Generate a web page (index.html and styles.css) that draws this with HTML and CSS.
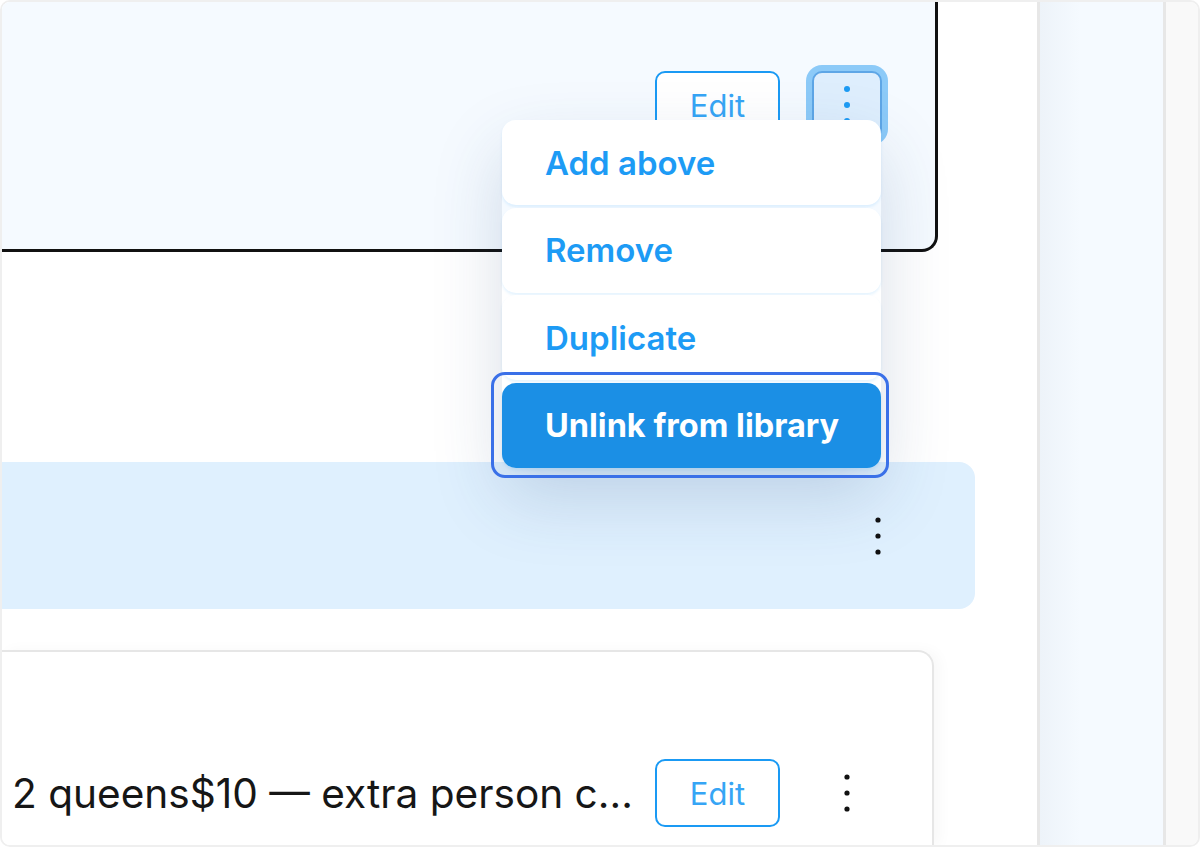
FILE: index.html
```html
<!DOCTYPE html>
<html lang="en">
<head>
<meta charset="utf-8">
<title>Blocks</title>
<link rel="stylesheet" href="styles.css">
</head>
<body>
<div class="frame">
  <main class="main">
    <section class="card-top">
      <div class="actions">
        <button class="btn-edit">Edit</button>
        <div class="kebab-wrap">
          <button class="kebab kebab-active" aria-label="More">
            <svg width="8" height="40" viewBox="0 0 8 40"><circle cx="4" cy="4" r="3"/><circle cx="4" cy="20" r="3"/><circle cx="4" cy="36" r="3"/></svg>
          </button>
          <div class="menu">
            <div class="menu-item">Add above</div>
            <div class="menu-item">Remove</div>
            <div class="menu-item">Duplicate</div>
            <div class="menu-item menu-item-primary">Unlink from library</div>
          </div>
        </div>
      </div>
    </section>
    <section class="strip">
      <button class="kebab kebab-dark" aria-label="More">
        <svg width="8" height="40" viewBox="0 0 8 40"><circle cx="4" cy="4" r="2.6"/><circle cx="4" cy="20" r="2.6"/><circle cx="4" cy="36" r="2.6"/></svg>
      </button>
    </section>
    <section class="card-bottom">
      <div class="row">
        <span class="row-text">2 queens$10 — extra person c...</span>
        <button class="btn-edit btn-edit-row">Edit</button>
        <button class="kebab kebab-dark" aria-label="More">
          <svg width="8" height="40" viewBox="0 0 8 40"><circle cx="4" cy="4" r="2.6"/><circle cx="4" cy="20" r="2.6"/><circle cx="4" cy="36" r="2.6"/></svg>
        </button>
      </div>
    </section>
  </main>
  <aside class="panel-blue"></aside>
  <aside class="panel-gray"></aside>
</div>
</body>
</html>
```
FILE: styles.css
```css
* { box-sizing: border-box; }
html, body { margin: 0; padding: 0; background: #fff; }
body { font-family: Inter, "Noto Sans", sans-serif; }

.frame {
  width: 1200px;
  height: 847px;
  border: 2px solid #efefef;
  border-radius: 10px;
  display: flex;
  overflow: hidden;
  background: #fff;
  position: relative;
}

.main {
  width: 1035px;
  flex: none;
  display: flex;
  flex-direction: column;
  background: #fff;
}

.panel-blue {
  width: 126px;
  flex: none;
  border-left: 3px solid #e7e7e7;
  background: linear-gradient(to right, #edf3f9, #f5faff 40px);
}

.panel-gray {
  flex: 1;
  border-left: 3px solid #e7e7e7;
  background: #f9f9f9;
}

.card-top {
  width: 936px;
  height: 250px;
  flex: none;
  background: #f5faff;
  border-right: 3px solid #111;
  border-bottom: 3px solid #111;
  border-bottom-right-radius: 16px;
  padding: 69px 53px 0 0;
  display: flex;
  justify-content: flex-end;
  align-items: flex-start;
  position: relative;
  z-index: 2;
}

.actions {
  display: flex;
  align-items: center;
  gap: 32px;
}

.btn-edit {
  width: 125px;
  height: 68px;
  border: 2.5px solid #1a9af4;
  border-radius: 10px;
  background: #fff;
  color: #36a5f5;
  font-family: Inter, "Noto Sans", sans-serif;
  font-size: 31px;
  font-weight: 400;
  padding: 0;
  display: flex;
  align-items: center;
  justify-content: center;
}

.kebab {
  width: 70px;
  height: 68px;
  border: none;
  background: transparent;
  padding: 0;
  display: grid;
  place-items: center;
}

.kebab-active {
  background: #deeefd;
  border: 2px solid #5ea6e6;
  border-radius: 10px;
  box-shadow: 0 0 0 6px #8ccaf8;
}
.kebab-active svg { fill: #1d9bf4; }
.kebab-dark svg { fill: #111; }

.kebab-wrap { position: relative; }

.menu {
  position: absolute;
  top: 49px;
  right: 1px;
  width: 379px;
  display: flex;
  flex-direction: column;
  gap: 2.5px;
  border-radius: 14px;
  box-shadow: 0 30px 70px rgba(40, 70, 120, 0.18);
  z-index: 10;
}

.menu-item {
  height: 85px;
  display: flex;
  align-items: center;
  padding-left: 43px;
  background: #fff;
  border-radius: 14px;
  font-size: 33px;
  font-weight: 600;
  color: #1d9bf5;
  box-shadow: 0 2px 3px rgba(29, 155, 245, 0.12);
  white-space: nowrap;
}

.menu-item-primary {
  background: #1b8fe5;
  color: #fff;
  font-weight: 700;
  font-size: 32.5px;
  position: relative;
}
.menu-item-primary::after {
  content: "";
  position: absolute;
  inset: -11px -8px -10px -11px;
  border: 3px solid #3a70e8;
  border-radius: 14px;
}

.strip {
  margin-top: 210px;
  width: 973px;
  height: 147px;
  flex: none;
  background: #dff0fe;
  border-radius: 0 16px 16px 0;
  display: flex;
  justify-content: flex-end;
  align-items: center;
  padding-right: 62px;
}

.card-bottom {
  margin-top: 41px;
  width: 932px;
  flex: 1;
  border-top: 2px solid #e6e6e6;
  border-right: 2px solid #e6e6e6;
  border-top-right-radius: 16px;
  padding: 107px 50px 0 10px;
  box-shadow: 6px 0 14px rgba(0, 0, 0, 0.03);
}

.row {
  display: flex;
  align-items: center;
}

.row-text {
  flex: 1;
  min-width: 0;
  white-space: nowrap;
  overflow: hidden;
  font-size: 40.6px;
  font-weight: 400;
  color: #161616;
  margin-right: 12px;
}

.btn-edit-row { margin-right: 32px; }
```
